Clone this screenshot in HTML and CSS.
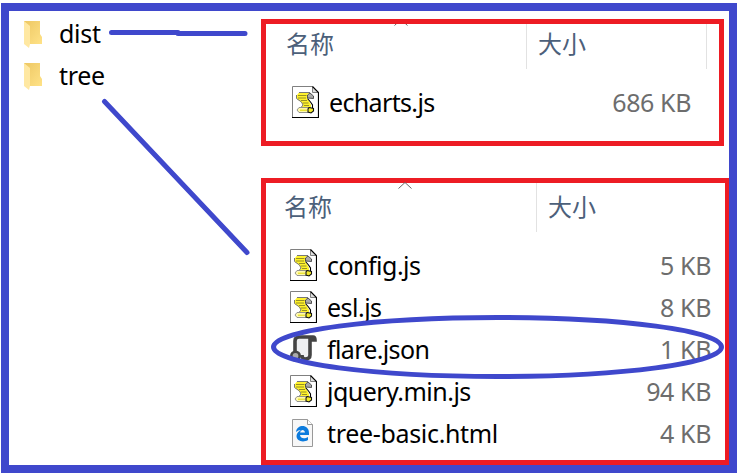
FILE: index.html
```
<!DOCTYPE html>
<html lang="zh-CN">
<head>
<meta charset="utf-8">
<title>dist / tree</title>
<link rel="stylesheet" href="styles.css">
</head>
<body>
<svg class="defs" width="0" height="0" aria-hidden="true">
  <defs>
    <linearGradient id="fold" x1="0" y1="0" x2="1" y2="1"><stop offset="0" stop-color="#edc763"/><stop offset="1" stop-color="#ffe287"/></linearGradient>
    <symbol id="folder" viewBox="0 0 19 27">
      <path d="M0 0H16V13L18 16V23H0Z" fill="url(#fold)"/>
      <path d="M0 0L6 5V23L5 27L0 23Z" fill="#ffe8a2"/>
    </symbol>
    <symbol id="script" viewBox="0 0 27 32">
      <path d="M.5 31.5V.5H20.5L26.5 6.5V31.5Z" fill="#fff"/>
      <path d="M.5 31V.5H20.5" fill="none" stroke="#808080"/>
      <path d="M20.5 .5V6.5H26" fill="#ddd" stroke="#808080"/>
      <path d="M20.5 .5L26.5 6.5V31.5H0" fill="none" stroke="#000" stroke-width="1.2"/>
      <path d="M7 6.500H18L15 9V12.500L17 15L19 19V22H9L11 19L9 16L5 13V9Z" fill="#fff22c"/>
      <path d="M7 6.500H18M4.500 9V12.500L9.500 16L11 19L9 21.500" fill="none" stroke="#777" stroke-width="1"/>
      <path d="M6 9.500H14.500M6 12H14M9 14.500H15M11 17H16.500M12 19.500H17" stroke="#8b8520" stroke-width=".9"/>
      <path d="M15.500 12V9L18 7L21.500 10V12.500Z" fill="#aaa" stroke="#333" stroke-width=".8"/>
      <path d="M15.500 12.500L18.500 16L20.500 19V22" fill="none" stroke="#000" stroke-width="1.1"/>
      <path d="M7 21.500H18L20 23L19 26.500H7L5 24Z" fill="#fff9ad" stroke="#888" stroke-width=".9"/>
      <path d="M8 24.200H15" stroke="#e1d900"/>
      <path d="M17 21.500L21.500 22.500V25L19 27L16 26V23Z" fill="#f4eb2c" stroke="#111" stroke-width="1.1"/>
    </symbol>
    <symbol id="json" viewBox="0 0 27 27">
      <path d="M7 3H21V23H10L5 16Z" fill="#eeeff1"/>
      <path d="M5 17V6Q5 2 9 2H23Q25 2 25 5H20V20Q20 24 15 24Q12 24 12 20" fill="none" stroke="#444" stroke-width="3.6"/>
      <circle cx="5.5" cy="21" r="4.2" fill="#aaa" stroke="#444" stroke-width="2.6"/>
    </symbol>
    <symbol id="html" viewBox="0 0 21 28">
      <path d="M.5 .5H15.5L20.5 5.5V27.5H.5Z" fill="#f7f7f7" stroke="#999"/>
      <path d="M15.5 .5V5.5H20.5" fill="#fff" stroke="#999"/>
      <path d="M4 13C5 5 17 5 17 14V16H8C8.500 20 13 20 16 18V21C11 24 4.500 22 4.500 17C4.500 14 7 12 9 11Q6 11 4 13ZM8 13.500H13C12.500 10 9 10 8 13.500Z" fill="#0c7bdd"/>
    </symbol>
  </defs>
</svg>
<main class="frame">
  <nav class="folders">
    <div class="folder"><svg class="folder-icon"><use href="#folder"/></svg><span>dist</span></div>
    <div class="folder"><svg class="folder-icon"><use href="#folder"/></svg><span>tree</span></div>
  </nav>
  <div class="panels">
    <section class="panel dist">
      <header class="head"><span class="name">名称</span><span class="size">大小</span></header>
      <svg class="sort" viewBox="0 0 14 7"><path d="M.5 6.500L7 .5L13.500 6.500"/></svg>
      <div class="row"><svg class="icon"><use href="#script"/></svg><span class="file">echarts.js</span><span class="kb">686 KB</span></div>
    </section>
    <section class="panel tree">
      <header class="head"><span class="name">名称</span><span class="size">大小</span></header>
      <svg class="sort" viewBox="0 0 14 7"><path d="M.5 6.500L7 .5L13.500 6.500"/></svg>
      <div class="row"><svg class="icon"><use href="#script"/></svg><span class="file">config.js</span><span class="kb">5 KB</span></div>
      <div class="row"><svg class="icon"><use href="#script"/></svg><span class="file">esl.js</span><span class="kb">8 KB</span></div>
      <div class="row"><svg class="icon json"><use href="#json"/></svg><span class="file tight">flare.json</span><span class="kb">1 KB</span></div>
      <div class="row"><svg class="icon"><use href="#script"/></svg><span class="file">jquery.min.js</span><span class="kb">94 KB</span></div>
      <div class="row"><svg class="icon html"><use href="#html"/></svg><span class="file wide">tree-basic.html</span><span class="kb">4 KB</span></div>
    </section>
  </div>
</main>
<svg class="marks" viewBox="0 0 737 476">
  <path d="M111.500 32.500H178M178 33.500H245M104.500 101.500L247 252.500"/>
  <ellipse cx="497.500" cy="347" rx="224" ry="29.500"/>
</svg>
</body>
</html>
```
FILE: styles.css
```
* { box-sizing: border-box; }
body {
  margin: 0;
  padding: 3px 0 3px 1px;
  width: 737px;
  height: 476px;
  overflow: hidden;
  background: #fff;
  font: 25px/40px "Noto Sans", "Noto Sans CJK SC", sans-serif;
  letter-spacing: -.52px;
  color: #000;
}
.defs { position: absolute; }
.frame {
  display: flex;
  width: 736px;
  height: 470px;
  border: 8px solid #3f48cc;
}
.folders { width: 252px; padding-top: 2px; }
.folder { display: flex; height: 42px; padding-left: 15px; white-space: nowrap; letter-spacing: -.3px; }
.folder-icon { width: 19px; height: 27px; margin: 8px 16px 0 0; }
.panels { flex: none; width: 468px; padding-top: 8px; }
.panel { position: relative; border: 5px solid #ed1c24; }
.dist { width: 463px; height: 127px; }
.tree { width: 468px; height: 287px; margin-top: 32px; border-right-width: 4px; }
.head {
  display: flex;
  color: #4c607a;
  font-family: "Noto Sans CJK SC", sans-serif;
  font-size: 24px;
  letter-spacing: 0;
  line-height: 36px;
}
.dist .head { height: 45px; margin-bottom: 13px; width: 441px; border-right: 1px solid #e2e2e2; }
.tree .head { height: 49px; margin-bottom: 13px; }
.name { border-right: 1px solid #e2e2e2; }
.dist .name { width: 261px; padding: 1px 0 0 20px; }
.tree .name { width: 271px; padding: 5px 0 0 18px; }
.size { padding-left: 11px; }
.dist .size { padding-top: 1px; }
.tree .size { padding-top: 5px; }
.sort { position: absolute; width: 14px; height: 7px; fill: none; stroke: #666; stroke-width: 1; }
.dist .sort { left: 128px; top: -5px; clip-path: inset(5px 0 0 0); }
.tree .sort { left: 132px; top: -1px; }
.row { display: flex; height: 42px; white-space: nowrap; }
.dist .row { padding: 0 28px 0 26px; }
.tree .row { padding: 0 14px 0 24px; }
.icon { flex: none; width: 27px; height: 32px; margin: 4px 10px 0 0; }
.icon.json { height: 27px; margin-top: 6px; }
.icon.html { width: 21px; height: 28px; margin: 6px 14px 0 2px; }
.wide { letter-spacing: -.33px; }
.tight { letter-spacing: -.65px; }
.dist .file { letter-spacing: -.65px; }
.kb { margin-left: auto; color: #6d6d6d; letter-spacing: -.4px; }
.marks {
  position: absolute;
  left: 0;
  top: 0;
  width: 737px;
  height: 476px;
  fill: none;
  stroke: #3f48cc;
  stroke-width: 5;
  stroke-linecap: round;
  pointer-events: none;
}
```
